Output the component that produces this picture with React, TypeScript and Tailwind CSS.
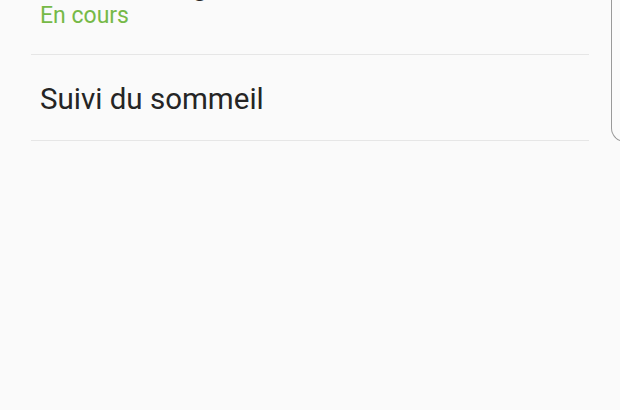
import React from "react";

export default function App() {
  return (
    <div
      className="relative h-[410px] w-[620px] overflow-hidden bg-[#fafafa]"
      style={{ fontFamily: "Roboto, 'Noto Sans', sans-serif" }}
    >
      <div className="mx-[31px]">
        <div className="mt-[-30px] pb-[23px] pl-[9px]">
          <div className="h-[30px] text-[29.5px] leading-[30px] text-[#252525] whitespace-nowrap">
            Suivi du rang
          </div>
          <div className="h-[31px] pt-[1px] text-[23px] leading-[30px] text-[#76b947]">
            En cours
          </div>
        </div>
        <div className="h-px bg-[#e6e6e6]" />
        <div className="h-[85px] pl-[9px] pt-[27px]">
          <div className="text-[29.5px] leading-[34px] text-[#252525]">
            Suivi du sommeil
          </div>
        </div>
        <div className="h-px bg-[#e6e6e6]" />
      </div>
      <div className="absolute left-[611px] top-[-60px] h-[202px] w-[40px] rounded-bl-[14px] border-b border-l border-[#999999]" />
    </div>
  );
}
